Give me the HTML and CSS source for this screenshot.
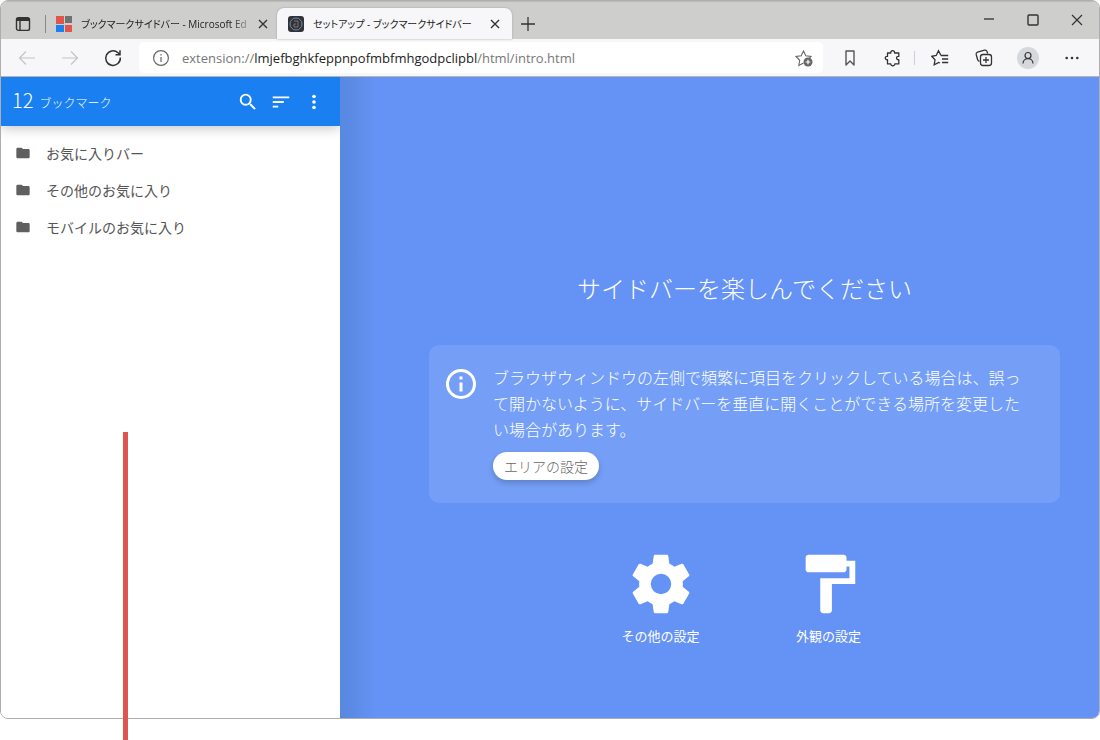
FILE: index.html
```
<!DOCTYPE html>
<html lang="ja">
<head>
<meta charset="utf-8">
<title>セットアップ - ブックマークサイドバー</title>
<link rel="stylesheet" href="styles.css">
</head>
<body>
<div class="window">
  <header class="titlebar">
    <button class="tab-actions" aria-label="タブ操作メニュー">
      <svg width="16" height="16" viewBox="0 0 16 16" fill="none" stroke="#333" stroke-width="1.4"><rect x="1.5" y="1.8" width="13" height="12.6" rx="2"/><path d="M1.5 3.6h13" stroke-width="3"/><path d="M5 5v9"/></svg>
    </button>
    <div class="tab">
      <svg class="favicon" width="16" height="16" viewBox="0 0 16 16"><path fill="#e0564c" d="M0 0h8v8H0zM9 9h7v7H9z"/><path fill="#6f7271" d="M9 0h7v7H9z"/><path fill="#1b80f0" d="M0 9h8v7H0z"/></svg>
      <span class="tab-title fade">ブックマークサイドバー - Microsoft Ed</span>
      <button class="tab-close" aria-label="タブを閉じる"><svg width="10" height="10" viewBox="0 0 10 10" stroke="#333" stroke-width="1.4"><path d="M1 1l8 8M9 1l-8 8"/></svg></button>
    </div>
    <div class="tab active">
      <svg class="favicon" width="16" height="16" viewBox="0 0 16 16"><rect width="16" height="16" rx="3" fill="#333"/><circle cx="8" cy="8" r="6" fill="none" stroke="#5f8dc4"/><path d="M6 5h4v6H6V8h2" fill="none" stroke="#777"/></svg>
      <span class="tab-title">セットアップ - ブックマークサイドバー</span>
      <button class="tab-close" aria-label="タブを閉じる"><svg width="10" height="10" viewBox="0 0 10 10" stroke="#333" stroke-width="1.4"><path d="M1 1l8 8M9 1l-8 8"/></svg></button>
    </div>
    <button class="new-tab" aria-label="新しいタブ"><svg width="14" height="14" viewBox="0 0 14 14" stroke="#333" stroke-width="1.3"><path d="M7 0v14M0 7h14"/></svg></button>
    <div class="window-controls">
      <button aria-label="最小化"><svg width="12" height="12" viewBox="0 0 12 12" stroke="#444" stroke-width="1.4"><path d="M1 5h10"/></svg></button>
      <button aria-label="最大化"><svg width="12" height="12" viewBox="0 0 12 12" fill="none" stroke="#333" stroke-width="1.4"><rect x="1" y="1" width="10" height="10" rx="1"/></svg></button>
      <button aria-label="閉じる"><svg width="12" height="12" viewBox="0 0 12 12" stroke="#333" stroke-width="1.2"><path d="M1 1l10 10M11 1L1 11"/></svg></button>
    </div>
  </header>

  <nav class="toolbar" aria-label="ツールバー">
    <div class="tools">
      <button aria-label="戻る" disabled><svg width="18" height="18" viewBox="0 0 18 18" fill="none" stroke="#c4c4c6" stroke-width="1.2"><path d="M17 9H2M8 2.5L1.5 9 8 15.500"/></svg></button>
      <button aria-label="進む" disabled><svg width="18" height="18" viewBox="0 0 18 18" fill="none" stroke="#c4c4c6" stroke-width="1.2"><path d="M1 9h15M10 2.500L16.500 9 10 15.500"/></svg></button>
      <button aria-label="更新"><svg width="18" height="18" viewBox="0 0 18 18" fill="none" stroke="#333" stroke-width="1.500"><path d="M16.300 8.500A7.300 7.300 0 1 1 14 3.800L16 5.600M16 1.200v4.500h-4.500"/></svg></button>
    </div>
    <div class="address">
      <svg width="18" height="18" viewBox="0 0 18 18" fill="none" stroke="#666" stroke-width="1.200"><circle cx="9" cy="9" r="7.400"/><path d="M9 8v5M9 5v1.500"/></svg>
      <span class="url">extension://<b>lmjefbghkfeppnpofmbfmhgodpclipbl</b>/html/intro.html</span>
      <button class="add-favorite" aria-label="お気に入りに追加"><svg width="18" height="18" viewBox="0 0 18 18"><path d="M8.500 14l-4.700 2.500.9-5.200L1 7.500l5.200-.8L8.500 2l2.300 4.700 5.200.8-1.500 1.500" fill="none" stroke="#666" stroke-width="1.100"/><circle cx="13" cy="13" r="4.500" fill="#666"/><path d="M13 10.700v4.600M10.700 13h4.600" stroke="#fff" stroke-width="1.200"/></svg></button>
    </div>
    <div class="tools">
      <button aria-label="ブックマーク"><svg width="18" height="18" viewBox="0 0 18 18" fill="none" stroke="#555" stroke-width="1.400"><path d="M5 2h8v14l-4-4-4 4z" stroke-linejoin="round"/></svg></button>
      <button aria-label="拡張機能"><svg width="18" height="18" viewBox="0 0 18 18" fill="none" stroke="#333" stroke-width="1.300"><path d="M3.500 4h3.300C6.300.8 11 .8 10.600 4h4.200v3.400c-3-.5-3 3.800 0 3.300v4.200h-4c.3 2.500-4.300 2.500-4 0H3.500v-4.200c-3 .5-3-3.800 0-3.300z" stroke-linejoin="round"/></svg></button>
      <span class="divider"></span>
    </div>
    <div class="tools spaced">
      <button aria-label="お気に入り"><svg width="18" height="18" viewBox="0 0 18 18" fill="none" stroke="#333" stroke-width="1.300"><path d="M10 6.500L7.500 1.700 5.200 6.500l-4.500.8 3.300 3.500-.8 5 4.500-2.400 1.300.6M10 6.500h7.200M11 10h6.200M11 13.500h6.200"/></svg></button>
      <button aria-label="コレクション"><svg width="18" height="18" viewBox="0 0 18 18" fill="none" stroke="#333" stroke-width="1.300"><path d="M4.500 12.300Q3 12 2.600 10.500L1.200 5.500Q.8 3.700 2.500 3.100L9.500 1.200Q11.500.8 12.100 2.600L12.600 4.500"/><rect x="5.500" y="5.500" width="11" height="11" rx="2.500"/><path d="M11 8v6M8 11h6"/></svg></button>
      <button aria-label="プロファイル"><svg width="22" height="22" viewBox="0 0 22 22"><circle cx="11" cy="11" r="11" fill="#d5d8dc"/><g fill="none" stroke="#333" stroke-width="1.200"><circle cx="11" cy="8.500" r="3"/><path d="M6 16.500c0-6.500 10-6.500 10 0"/></g></svg></button>
      <button aria-label="設定など"><svg width="14" height="14" viewBox="0 0 14 14" fill="#333"><circle cx="1.700" cy="7" r="1.300"/><circle cx="7" cy="7" r="1.300"/><circle cx="12.300" cy="7" r="1.300"/></svg></button>
    </div>
  </nav>

  <div class="page">
    <aside class="sidebar">
      <header class="sidebar-head">
        <h2 class="count"><span class="number">12</span><span>ブックマーク</span></h2>
        <button aria-label="検索"><svg width="22" height="22" viewBox="0 0 24 24" fill="#fff"><path d="M15.500 14h-.79l-.28-.27A6.470 6.470 0 0 0 16 9.500 6.500 6.500 0 1 0 9.500 16c1.610 0 3.090-.59 4.230-1.570l.27.28v.79l5 4.990L20.490 19zm-6 0a4.500 4.500 0 1 1 0-9 4.500 4.500 0 0 1 0 9z"/></svg></button>
        <button aria-label="並べ替え"><svg width="22" height="22" viewBox="0 0 24 24" fill="#fff"><path d="M3 18h6v-2H3zM3 6v2h18V6zm0 7h12v-2H3z"/></svg></button>
        <button aria-label="メニュー"><svg width="22" height="22" viewBox="0 0 24 24" fill="#fff"><circle cx="12" cy="6" r="2"/><circle cx="12" cy="12" r="2"/><circle cx="12" cy="18" r="2"/></svg></button>
      </header>
      <ul class="folders">
        <li><a href="#"><svg width="16" height="16" viewBox="0 0 24 24" fill="#5f5f5f"><path d="M10 4H4c-1.100 0-2 .9-2 2v12c0 1.100.9 2 2 2h16c1.100 0 2-.9 2-2V8c0-1.100-.9-2-2-2h-8z"/></svg>お気に入りバー</a></li>
        <li><a href="#"><svg width="16" height="16" viewBox="0 0 24 24" fill="#5f5f5f"><path d="M10 4H4c-1.100 0-2 .9-2 2v12c0 1.100.9 2 2 2h16c1.100 0 2-.9 2-2V8c0-1.100-.9-2-2-2h-8z"/></svg>その他のお気に入り</a></li>
        <li><a href="#"><svg width="16" height="16" viewBox="0 0 24 24" fill="#5f5f5f"><path d="M10 4H4c-1.100 0-2 .9-2 2v12c0 1.100.9 2 2 2h16c1.100 0 2-.9 2-2V8c0-1.100-.9-2-2-2h-8z"/></svg>モバイルのお気に入り</a></li>
      </ul>
    </aside>
    <main class="intro">
      <h1>サイドバーを楽しんでください</h1>
      <section class="notice">
        <svg class="notice-icon" width="36" height="36" viewBox="0 0 24 24" fill="#fff"><path d="M11 17h2v-6h-2zm1-15a10 10 0 1 0 0 20 10 10 0 0 0 0-20zm0 18a8 8 0 1 1 0-16 8 8 0 0 1 0 16zM11 9h2V7h-2z"/></svg>
        <div class="notice-body">
          <p>ブラウザウィンドウの左側で頻繁に項目をクリックしている場合は、誤って開かないように、サイドバーを垂直に開くことができる場所を変更したい場合があります。</p>
          <button class="pill">エリアの設定</button>
        </div>
      </section>
      <div class="links">
        <a href="#"><svg width="70" height="70" viewBox="0 0 24 24" fill="#fff"><path d="M19.430 12.980c.04-.32.07-.64.07-.98s-.03-.66-.07-.98l2.110-1.650c.19-.15.24-.42.12-.64l-2-3.460c-.12-.22-.39-.3-.61-.22l-2.490 1c-.52-.4-1.080-.73-1.690-.98l-.38-2.650A.488.488 0 0 0 14 2h-4c-.25 0-.46.18-.49.42l-.38 2.650c-.61.25-1.170.59-1.690.98l-2.490-1c-.23-.09-.49 0-.61.22l-2 3.460c-.13.22-.07.49.12.64l2.110 1.650c-.04.32-.07.65-.07.98s.03.66.07.98l-2.110 1.650c-.19.15-.24.42-.12.64l2 3.460c.12.22.39.3.61.22l2.490-1c.52.4 1.080.73 1.690.98l.38 2.650c.03.24.24.42.49.42h4c.25 0 .46-.18.49-.42l.38-2.650c.61-.25 1.170-.59 1.690-.98l2.490 1c.23.09.49 0 .61-.22l2-3.460c.12-.22.07-.49-.12-.64zM12 15.500a3.500 3.500 0 1 1 0-7 3.500 3.500 0 0 1 0 7z"/></svg>その他の設定</a>
        <a href="#"><svg width="70" height="70" viewBox="0 0 24 24" fill="#fff"><path d="M18 4V3c0-.55-.45-1-1-1H5c-.55 0-1 .45-1 1v4c0 .55.45 1 1 1h12c.55 0 1-.45 1-1V6h1v4H9v11c0 .55.45 1 1 1h2c.55 0 1-.45 1-1v-9h8V4z"/></svg>外観の設定</a>
      </div>
    </main>
  </div>
</div>
<div class="pointer-line"></div>
</body>
</html>
```
FILE: styles.css
```
* { box-sizing: border-box; }

body {
  margin: 0;
  min-height: 100vh;
  padding-bottom: 21px;
  display: flex;
  position: relative;
  background: #fff;
  font-family: "Noto Sans CJK JP", sans-serif;
}

button {
  margin: 0;
  padding: 0;
  border: 0;
  background: none;
  font: inherit;
  color: inherit;
  display: flex;
  align-items: center;
  justify-content: center;
}

a { color: inherit; text-decoration: none; }

svg { display: block; flex: none; }

.window {
  flex: 1;
  min-width: 0;
  display: flex;
  flex-direction: column;
  border: 1px solid #aeaeae;
  border-radius: 8px;
  overflow: hidden;
}

/* Title bar and tabs */
.titlebar {
  height: 38px;
  padding-top: 6px;
  display: flex;
  background: #cececc;
  border-top: 1px solid #bbb;
}

.tab-actions { width: 44px; }

.tab {
  width: 232px;
  padding: 0 6px 0 11px;
  display: flex;
  align-items: center;
  position: relative;
}

.tab::before {
  content: "";
  position: absolute;
  left: 0;
  top: 7px;
  bottom: 6px;
  width: 1px;
  background: #8d8781;
}

.tab.active {
  width: 235px;
  padding-right: 9px;
  background: #f7f7f9;
  border-radius: 7px 7px 0 0;
  box-shadow: 0 0 2px #999;
}

.tab.active::before { content: none; }

.tab-title {
  flex: 1;
  min-width: 0;
  margin: 0 4px 0 9px;
  white-space: nowrap;
  font-family: "Open Sans", "Noto Sans CJK JP", sans-serif;
  font-size: 10px;
  line-height: 18px;
  font-feature-settings: "palt";
  color: #222;
}

.fade {
  -webkit-mask-image: linear-gradient(to right, #000 88%, rgba(0, 0, 0, 0.2));
  mask-image: linear-gradient(to right, #000 88%, rgba(0, 0, 0, 0.2));
}

.tab-close { width: 16px; height: 20px; }

.new-tab { width: 32px; }

.window-controls {
  margin-left: auto;
  display: flex;
  height: 24px;
}

.window-controls button { width: 44px; }

/* Toolbar */
.toolbar {
  height: 38px;
  padding: 0 6px 0 4px;
  display: flex;
  align-items: center;
  gap: 5px;
  background: #f7f7f9;
  border-bottom: 1px solid #b5b5b5;
}

.tools { display: flex; align-items: center; }

.tools button { width: 43px; height: 30px; }

.spaced { gap: 1px; margin-left: -5px; }

.divider { width: 4px; height: 14px; border-left: 1px solid #ccd0d6; }

.address {
  flex: 1;
  min-width: 0;
  height: 31px;
  padding: 0 10px 0 13px;
  display: flex;
  align-items: center;
  background: #fff;
  border-radius: 5px;
}

.url {
  flex: 1;
  margin-left: 12px;
  font-family: "Open Sans", sans-serif;
  font-size: 13px;
  line-height: 18px;
  color: #777;
}

.url b { font-weight: 400; color: #222; }

/* Page */
.page { flex: 1; display: flex; }

.sidebar {
  flex: 0 0 339px;
  background: #fff;
}

.sidebar-head {
  height: 49px;
  padding: 0 10px 0 11px;
  display: flex;
  align-items: center;
  background: #1a80f2;
  color: #fff;
  box-shadow: 0 2px 12px rgba(0, 0, 0, 0.24);
  clip-path: inset(0 0 -16px 0);
}

.sidebar-head button { width: 33px; height: 32px; }

.count {
  flex: 1;
  margin: 0;
  display: flex;
  align-items: baseline;
  gap: 6px;
  font-size: 12px;
  font-weight: 300;
  line-height: 26px;
}

.number { font-size: 20px; }

.folders {
  list-style: none;
  margin: 0;
  padding: 8px 0;
}

.folders a {
  height: 37px;
  padding-left: 14px;
  display: flex;
  align-items: center;
  gap: 15px;
  font-size: 14px;
  font-weight: 400;
  line-height: 20px;
  color: #555;
}

.intro {
  flex: 1;
  min-width: 0;
  padding: 193px 39px 60px 89px;
  display: flex;
  flex-direction: column;
  align-items: center;
  background: linear-gradient(to right, #5988e1, #5c8be6 14px, #6593f5 36px);
  color: #fff;
}

.intro h1 {
  margin: 0 0 39px;
  font-size: 24px;
  font-weight: 300;
  line-height: 36px;
}

.notice {
  align-self: stretch;
  padding: 19px 30px 23px 14px;
  display: flex;
  gap: 14px;
  background: #759ff7;
  border-radius: 10px;
}

.notice-icon { margin-top: 2px; }

.notice-body { flex: 1; }

.notice p {
  margin: 0 0 10px;
  font-size: 16px;
  font-weight: 300;
  line-height: 26px;
}

.pill {
  height: 28px;
  padding: 0 11px;
  border-radius: 14px;
  background: #fff;
  color: #666;
  font-size: 14px;
  font-weight: 300;
  line-height: 20px;
  box-shadow: 0 3px 6px rgba(0, 0, 0, 0.2);
}

.links {
  margin-top: 46px;
  display: flex;
}

.links a {
  width: 168px;
  display: flex;
  flex-direction: column;
  align-items: center;
  gap: 7px;
  font-size: 13px;
  line-height: 20px;
}

/* Callout line that leads from the sidebar to below the window */
.pointer-line {
  position: absolute;
  left: 123px;
  top: 432px;
  bottom: 0;
  width: 5px;
  background: #dd554c;
}
```
